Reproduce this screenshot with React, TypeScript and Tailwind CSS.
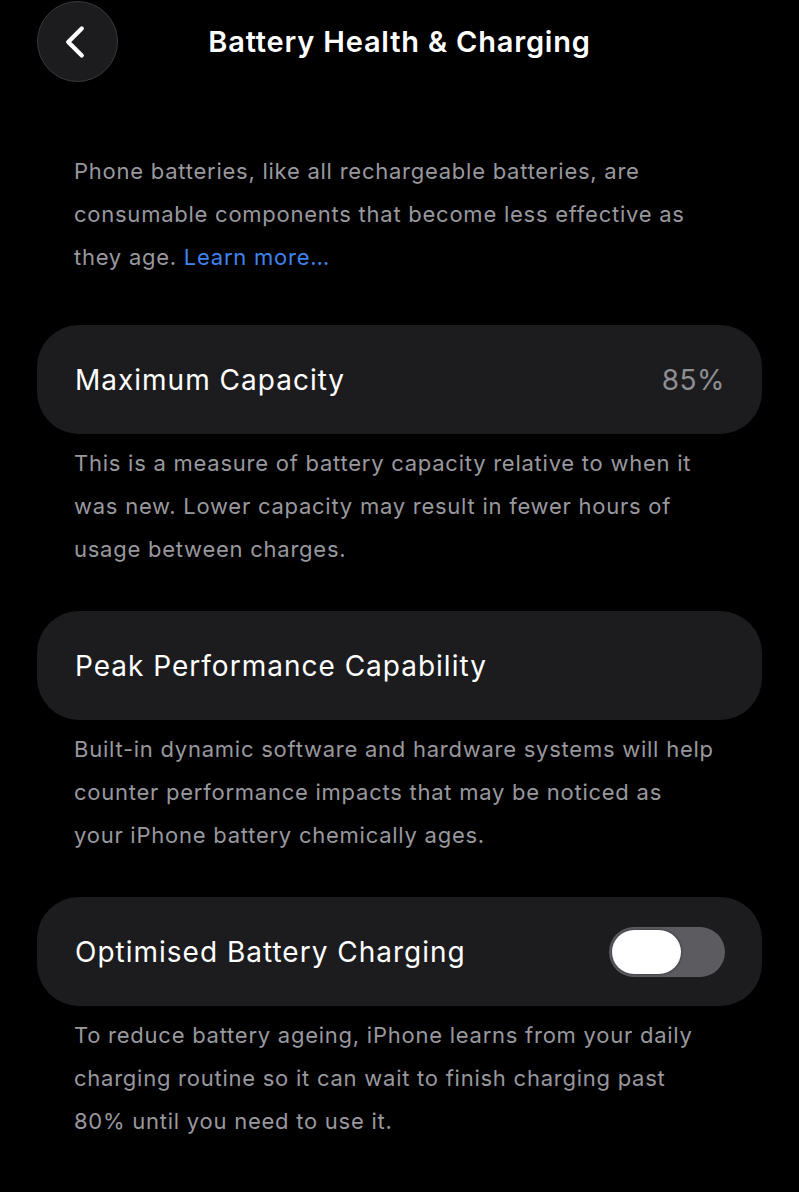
import { ChevronLeft } from "lucide-react";

const font = { fontFamily: "Inter, 'Noto Sans', sans-serif" };

function Toggle({ on }: { on: boolean }) {
  return (
    <div
      className={`flex h-[50px] w-[116px] items-center rounded-full p-[3px] ${
        on ? "justify-end bg-[#34c759]" : "justify-start bg-[#5b5b60]"
      }`}
    >
      <div className="h-[44px] w-[69px] rounded-full bg-white shadow-[0_0_3px_rgba(0,0,0,0.5)]" />
    </div>
  );
}

function Row({ label, value, toggle }: { label: string; value?: string; toggle?: boolean }) {
  return (
    <div className="flex h-[109px] items-center justify-between rounded-[42px] bg-[#1c1c1e] pl-[38px] pr-[37px]">
      <span className="text-[28px] tracking-[1px] text-white">{label}</span>
      {value && <span className="text-[28px] tracking-[0.5px] text-[#8e8e93]">{value}</span>}
      {toggle !== undefined && <Toggle on={toggle} />}
    </div>
  );
}

function Caption({ children }: { children: React.ReactNode }) {
  return (
    <p className="mt-[8px] pl-[37px] pr-[47px] text-[22px] leading-[43px] tracking-[0.75px] text-[#98989e]">
      {children}
    </p>
  );
}

export default function App() {
  return (
    <div className="min-h-[1192px] w-[799px] bg-black" style={font}>
      <header className="relative flex h-[84px] items-center justify-center">
        <button className="absolute left-[37px] top-[1px] flex h-[81px] w-[81px] items-center justify-center rounded-full border border-[#3a3a3c] bg-[#1c1c1e]">
          <ChevronLeft size={54} strokeWidth={1.9} className="-translate-x-[3px] text-white" />
        </button>
        <h1 className="text-[29px] font-semibold tracking-[0.8px] text-white">
          Battery Health &amp; Charging
        </h1>
      </header>

      <div className="px-[37px]">
        <p className="mt-[66px] pl-[37px] pr-[47px] text-[22px] leading-[43px] tracking-[0.75px] text-[#98989e]">
          Phone batteries, like all rechargeable batteries, are consumable components that become
          less effective as they age. <span className="text-[#3f83f0]">Learn more…</span>
        </p>

        <div className="mt-[46px]">
          <Row label="Maximum Capacity" value="85%" />
          <Caption>
            This is a measure of battery capacity relative to when it was new. Lower capacity may
            result in fewer hours of usage between charges.
          </Caption>
        </div>

        <div className="mt-[40px]">
          <Row label="Peak Performance Capability" />
          <Caption>
            Built-in dynamic software and hardware systems will help counter performance impacts
            that may be noticed as your iPhone battery chemically ages.
          </Caption>
        </div>

        <div className="mt-[40px]">
          <Row label="Optimised Battery Charging" toggle={false} />
          <Caption>
            To reduce battery ageing, iPhone learns from your daily charging routine so it can wait
            to finish charging past 80% until you need to use it.
          </Caption>
        </div>
      </div>
    </div>
  );
}
